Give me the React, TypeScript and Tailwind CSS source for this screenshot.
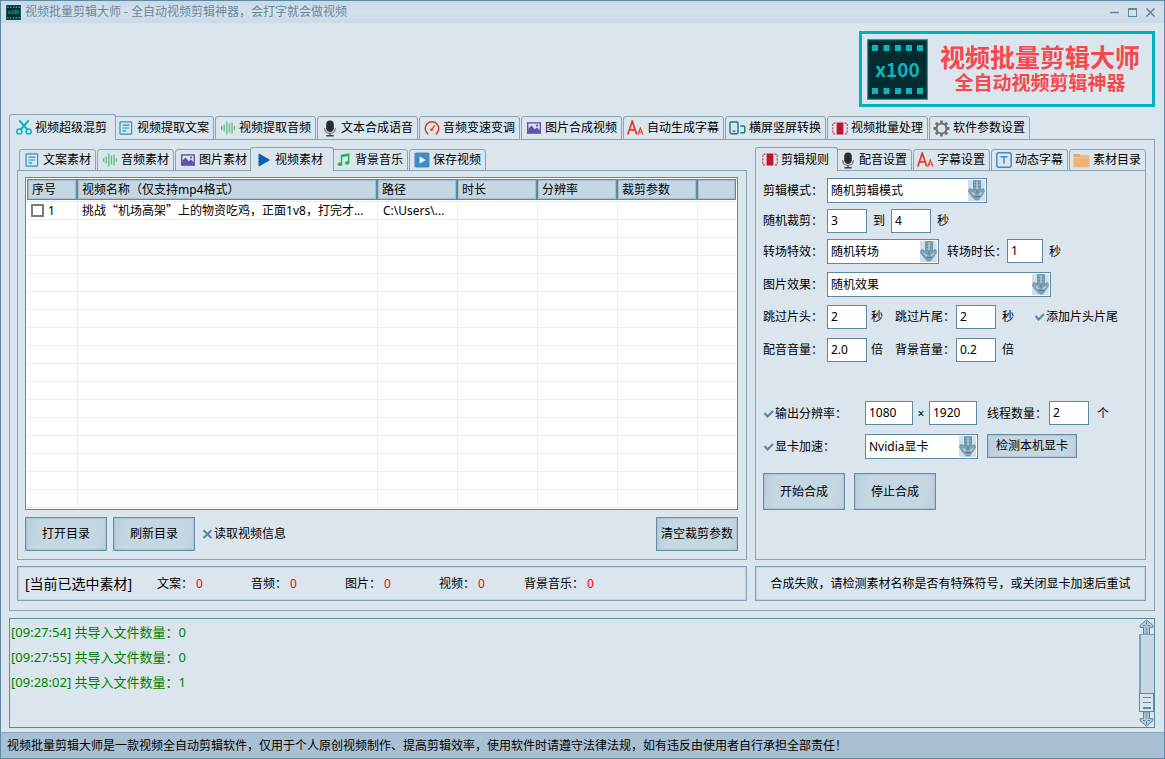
import { useState } from 'react';
import type { ReactNode } from 'react';

/* ---------- icons ---------- */

const ScissorsIcon = () => (
  <svg width="17" height="17" viewBox="0 0 17 17" fill="none" stroke="#0fb5c0" strokeLinecap="round">
    <circle cx="3.600" cy="12.800" r="2.700" strokeWidth="1.600" />
    <circle cx="13.400" cy="12.800" r="2.700" strokeWidth="1.600" />
    <path d="M4 1.500 11.800 10.400M13 1.500 5.200 10.400" strokeWidth="2.200" />
  </svg>
);

const NoteIcon = () => (
  <svg width="16" height="16" viewBox="0 0 16 16" fill="none" stroke="#1c9ac0" strokeWidth="1.2">
    <rect x="2" y="1.8" width="11.6" height="12.4" rx="0.8" />
    <path d="M4.5 5.2h7M4.5 8h6.5M4.5 10.8h3.6" />
  </svg>
);

const WaveIcon = () => (
  <svg width="16" height="16" viewBox="0 0 16 16" fill="none" stroke="#62c282" strokeWidth="1.4">
    <path d="M1.7 6v4M4.2 4.5v7M6.8 1.5v13M9.4 3.5v9M12 2.5v11M14.4 6v4" />
  </svg>
);

const MicIcon = () => (
  <svg width="16" height="17" viewBox="0 0 16 17" fill="none">
    <rect x="4.200" y="0.500" width="7.600" height="11.400" rx="3.800" fill="#2c2c2c" />
    <path d="M2.600 8c.2 3.400 2.300 5.400 5.400 5.400s5.200-2 5.400-5.400" stroke="#77797b" strokeWidth="1.200" />
    <path d="M8 13.400v2M4.300 15.800h7.400" stroke="#444" strokeWidth="1.400" />
  </svg>
);

const GaugeIcon = () => (
  <svg width="17" height="16" viewBox="0 0 17 16" fill="none" stroke="#e03a20" strokeWidth="1.6" strokeLinecap="round">
    <path d="M4 14.200A7.200 7.200 0 1 1 13 14.200" />
    <path d="M8.300 9.400 11.300 5.600" strokeWidth="1.300" />
    <circle cx="8" cy="9.800" r="0.600" />
  </svg>
);

const ImageIcon = () => (
  <svg width="16" height="14" viewBox="0 0 16 14">
    <rect x="1" y="1.200" width="14" height="11.600" fill="#6350a8" />
    <rect x="2.400" y="2.600" width="11.200" height="7" fill="#dbe5ed" />
    <path d="M2.400 10V7.600L5.600 4.400l3.200 3.800 2-1.600 2.800 2.400V10z" fill="#6350a8" />
    <circle cx="11" cy="4.600" r="1.100" fill="#6350a8" />
  </svg>
);

const LettersIcon = () => (
  <svg className="shrink-0" width="17" height="16" viewBox="0 0 17 16" fill="none" stroke="#e4391f">
    <path d="M.8 14.500 5.200 1.200 9.800 14.500M2.400 9.800h5.800" strokeWidth="1.700" />
    <path d="M10.800 14.500 13.300 8 16 14.500M11.800 12.200h3.200" strokeWidth="1.100" />
  </svg>
);

const ScreensIcon = () => (
  <svg className="shrink-0" width="17" height="14" viewBox="0 0 17 14" fill="none" stroke="#157a80" strokeWidth="1.400">
    <rect x="1" y="1" width="8" height="11.800" rx="1.200" />
    <path d="M3.600 10.200h2.800" />
    <path d="M11.400 5h3.200a1.200 1.200 0 0 1 1.200 1.200v4.400a1.200 1.200 0 0 1-1.200 1.200h-3.200" />
  </svg>
);

const FilmIcon = () => (
  <svg width="16" height="13" viewBox="0 0 16 13" fill="none">
    <rect x="4.600" y="0.500" width="6.800" height="12" fill="#bd1230" />
    <path d="M3.600 1.200H.8v10.600h2.800M12.400 1.200h2.800v10.600h-2.800" stroke="#d0405c" strokeWidth="1.200" strokeDasharray="2.200 1.200" />
  </svg>
);

const GearIcon = () => (
  <svg className="shrink-0" width="17" height="17" viewBox="0 0 17 17" fill="none" stroke="#727272">
    <circle cx="8.500" cy="8.500" r="5" strokeWidth="2.200" />
    <path
      d="M8.500 .5v3M8.500 13.500v3M.5 8.500h3M13.500 8.500h3M2.800 2.800l2.100 2.100M12.100 12.100l2.100 2.100M2.800 14.200l2.100-2.100M12.100 4.900l2.100-2.100"
      strokeWidth="2.800"
    />
  </svg>
);

const PlayIcon = () => (
  <svg width="14" height="14" viewBox="0 0 14 14">
    <path d="M2 1 12.400 7 2 13z" fill="#0861b8" stroke="#0861b8" strokeLinejoin="round" />
  </svg>
);

const MusicIcon = () => (
  <svg width="14" height="14" viewBox="0 0 14 14" fill="none">
    <path d="M4.500 10.800V2.300l7.200-1.100v8.200" stroke="#2bb35a" strokeWidth="1.500" />
    <path d="M4.500 3.200l7.200-1.100" stroke="#2bb35a" strokeWidth="2" />
    <ellipse cx="3" cy="11.200" rx="2.300" ry="1.900" fill="#2bb35a" />
    <ellipse cx="10.200" cy="9.800" rx="2.300" ry="1.900" fill="#2bb35a" />
  </svg>
);

const PlayBoxIcon = () => (
  <svg width="16" height="16" viewBox="0 0 16 16">
    <rect x="0.500" y="0.500" width="15" height="15" rx="1.500" fill="#3d8ccb" />
    <path d="M5.600 4.400 11.800 8l-6.200 3.600z" fill="#fff" />
  </svg>
);

const TextBoxIcon = () => (
  <svg width="16" height="16" viewBox="0 0 16 16" fill="none" stroke="#4288c8">
    <rect x="0.800" y="0.800" width="14.400" height="14.400" rx="2" strokeWidth="1.500" />
    <path d="M4.400 4.800h7.200M8 4.800v7" strokeWidth="1.400" />
  </svg>
);

const FolderIcon = () => (
  <svg className="shrink-0" width="17" height="15" viewBox="0 0 17 15">
    <path d="M.5 1h6l1.200 1.500h8.800v1.300H.5z" fill="#e8a45c" />
    <rect x="0.500" y="4.600" width="16" height="9.600" rx="0.600" fill="#f0b377" />
  </svg>
);

const FilmLogo = ({ className }: { className: string }) => (
  <svg className={className} viewBox="0 0 61 61" aria-hidden="true">
    <rect x="0.500" y="0.500" width="60" height="60" rx="1" fill="#032c31" stroke="#00a8b2" strokeWidth="1.500" />
    {[5, 16.5, 28, 39, 50].map((x) => (
      <g key={x} fill="#0bb4bf">
        <rect x={x} y="6" width="6" height="6" />
        <rect x={x} y="49" width="6" height="6" />
      </g>
    ))}
    <text x="30.500" y="37.500" textAnchor="middle" fontSize="19" fontWeight="700" fill="#0bb4bf" fontFamily="'Noto Sans CJK SC', sans-serif">
      x100
    </text>
  </svg>
);

const ArrowGlyph = () => (
  <svg width="17" height="21" viewBox="0 0 17 21" aria-hidden="true">
    <path d="M5.500.5h7v9.500l3-1.500 1 3-3.500 5-2.500 3.500h-3L4 16.500l-3.500-5 1-3 4 1.500z" fill="#7fa4b5" stroke="#6f98ab" />
    <path d="M6 3.500h6M6 6.500h6M6 9.500h6" stroke="#5a8aa0" strokeWidth="0.800" />
    <path d="M9 1.500v8M4 12.500l3 2.500M14 12.500l-3 2.500" stroke="#c3d7e1" strokeWidth="1.200" />
    <path d="M9 10.500v3M6 16.500h6" stroke="#477d95" strokeWidth="1.200" />
  </svg>
);

const ScrollArrow = ({ down = false }: { down?: boolean }) => (
  <svg className={down ? 'rotate-180' : ''} width="15" height="15" viewBox="0 0 15 15" aria-hidden="true">
    <path d="M7.500.8 14 6.500v1.800h-3.500V15h-6V8.300H1V6.500z" fill="#b4cbd6" stroke="#5a899e" />
    <path d="M7.500 2.500v3M4 6.500h2.500M8.500 6.500H11M6.500 9h2M6.500 11h2M6.500 13h2" stroke="#5a899e" />
  </svg>
);

/* ---------- tabs ---------- */

type Tab = { label: string; icon: ReactNode };

const mainTabs: Tab[] = [
  { label: '视频超级混剪', icon: <ScissorsIcon /> },
  { label: '视频提取文案', icon: <NoteIcon /> },
  { label: '视频提取音频', icon: <WaveIcon /> },
  { label: '文本合成语音', icon: <MicIcon /> },
  { label: '音频变速变调', icon: <GaugeIcon /> },
  { label: '图片合成视频', icon: <ImageIcon /> },
  { label: '自动生成字幕', icon: <LettersIcon /> },
  { label: '横屏竖屏转换', icon: <ScreensIcon /> },
  { label: '视频批量处理', icon: <FilmIcon /> },
  { label: '软件参数设置', icon: <GearIcon /> },
];

const materialTabs: Tab[] = [
  { label: '文案素材', icon: <NoteIcon /> },
  { label: '音频素材', icon: <WaveIcon /> },
  { label: '图片素材', icon: <ImageIcon /> },
  { label: '视频素材', icon: <PlayIcon /> },
  { label: '背景音乐', icon: <MusicIcon /> },
  { label: '保存视频', icon: <PlayBoxIcon /> },
];

const ruleTabs: Tab[] = [
  { label: '剪辑规则', icon: <FilmIcon /> },
  { label: '配音设置', icon: <MicIcon /> },
  { label: '字幕设置', icon: <LettersIcon /> },
  { label: '动态字幕', icon: <TextBoxIcon /> },
  { label: '素材目录', icon: <FolderIcon /> },
];

function TabStrip({ tabs, initial, name, large = false }: { tabs: Tab[]; initial: number; name: string; large?: boolean }) {
  const [active, setActive] = useState(initial);
  return (
    <div
      role="tablist"
      aria-label={name}
      className={`-mb-px flex items-end gap-px ${large ? 'h-[26px]' : 'h-6'} ${active === 0 ? '' : 'pl-0.5'}`}
    >
      {tabs.map((tab, i) => {
        const on = i === active;
        const width = large ? (on ? 'w-[107px]' : 'w-[101px]') : on ? (i ? 'w-[84px]' : 'w-[83px]') : 'w-[77px]';
        const height = on ? 'h-full' : large ? 'h-6' : 'h-[22px]';
        const state = on ? `z-10 -mr-1 border-b-0 ${i ? '-ml-[3px] pr-2.5' : 'pr-2'}` : 'pr-1';
        return (
          <button
            key={tab.label}
            type="button"
            role="tab"
            aria-selected={on}
            onClick={() => setActive(i)}
            className={`relative flex shrink-0 items-center justify-end gap-[3px] rounded-t-[3px] border border-[#8ba5b2] bg-[#dbe5ed] whitespace-nowrap ${width} ${height} ${state}`}
          >
            <span className="flex w-4 shrink-0 justify-center">{tab.icon}</span>
            {tab.label}
          </button>
        );
      })}
    </div>
  );
}

/* ---------- form controls ---------- */

function NumberBox({ id, label, value, width = 'w-10' }: { id: string; label?: string; value: string; width?: string }) {
  return (
    <input
      id={id}
      aria-label={label}
      defaultValue={value}
      className={`h-6 self-start border border-[#5b8aa2] bg-white px-[3px] pb-px outline-none ${width}`}
    />
  );
}

function Picker({ id, label, options, width }: { id: string; label?: string; options: string[]; width: string }) {
  return (
    <span className={`grid ${width}`}>
      <select
        id={id}
        aria-label={label}
        className="col-start-1 row-start-1 h-[25px] w-full appearance-none border border-[#5b8aa2] bg-white pr-5 pl-[3px] outline-none"
      >
        {options.map((o) => (
          <option key={o}>{o}</option>
        ))}
      </select>
      <span className="pointer-events-none z-10 col-start-1 row-start-1 mr-0.5 self-center justify-self-end bg-[#d0dfe9]">
        <ArrowGlyph />
      </span>
    </span>
  );
}

function Tick({ id, label, checked = false }: { id: string; label: string; checked?: boolean }) {
  const [on, setOn] = useState(checked);
  return (
    <label htmlFor={id} className="flex items-center gap-px whitespace-nowrap">
      <span className="grid h-3 w-[11px] place-items-center">
        <input
          id={id}
          type="checkbox"
          checked={on}
          onChange={() => setOn(!on)}
          className="col-start-1 row-start-1 h-3 w-[11px] appearance-none"
        />
        <svg className="pointer-events-none col-start-1 row-start-1" width="11" height="10" viewBox="0 0 11 10" fill="none" stroke="#5487a0" strokeWidth="2">
          {on ? <path d="M1.500 4 4.500 7.500 10 2" /> : <path d="M1.500 1.200 9.500 9M9.500 1.200 1.500 9" />}
        </svg>
      </span>
      {label}
    </label>
  );
}

const buttonLook =
  'border border-[#668ea5] bg-[linear-gradient(100deg,#b9cddb,#c5d7e3_18%,#c5d7e3_85%,#bed0de)] shadow-[inset_0_0_1px_1px_#a9c2d0] whitespace-nowrap';

function ActionButton({ children, size }: { children: ReactNode; size: string }) {
  return (
    <button type="button" className={`${buttonLook} ${size}`}>
      {children}
    </button>
  );
}

function FieldLabel({ htmlFor, children }: { htmlFor: string; children: ReactNode }) {
  return (
    <label htmlFor={htmlFor} className="w-16 shrink-0 whitespace-nowrap">
      {children}
    </label>
  );
}

/* ---------- material list ---------- */

const columns = [
  { title: '序号', width: 'w-[50px]' },
  { title: '视频名称（仅支持mp4格式）', width: '' },
  { title: '路径', width: 'w-20' },
  { title: '时长', width: 'w-20' },
  { title: '分辨率', width: 'w-20' },
  { title: '裁剪参数', width: 'w-20' },
  { title: '', width: 'w-[39px]' },
];

const emptyRows = Array.from({ length: 16 }, (_, i) => i);

function MaterialTable() {
  return (
    <div className="border border-[#5b8aa2] bg-white p-px">
      <table className="w-full table-fixed border-separate border-spacing-0 text-left">
        <thead>
          <tr>
            {columns.map((c, i) => (
              <th key={i} className={`border-b border-[#ececec] p-0 pb-px font-normal ${c.width}`}>
                <div className="h-[21px] border border-[#5b8aa2] bg-[#c5d7e3] pl-1 leading-[19px] whitespace-nowrap shadow-[inset_0_0_1px_1px_#a3bdcc]">
                  {c.title}
                </div>
              </th>
            ))}
          </tr>
        </thead>
        <tbody>
          <tr>
            <td className="h-[18px] border-b border-[#ececec] p-0">
              <label className="flex items-center gap-1 pl-1">
                <input type="checkbox" className="size-[13px] appearance-none border-2 border-[#7b7b7b] bg-white" />
                1
              </label>
            </td>
            <td className="truncate border-b border-l border-[#ececec] p-0 pl-1 leading-4">
              挑战<span className="font-['Noto_Sans_CJK_SC',sans-serif]">“</span>机场高架
              <span className="font-['Noto_Sans_CJK_SC',sans-serif]">”</span>上的物资吃鸡，正面1v8，打完才...
            </td>
            <td className="border-b border-l border-[#ececec] p-0 pl-[5px] leading-4 whitespace-nowrap">C:\Users\...</td>
            {[0, 1, 2, 3].map((i) => (
              <td key={i} className="border-b border-l border-[#ececec] p-0" />
            ))}
          </tr>
          {emptyRows.map((r) => (
            <tr key={r}>
              {columns.map((_, i) => (
                <td key={i} className={`h-[18px] border-b border-[#ececec] p-0 ${i ? 'border-l' : ''}`} />
              ))}
            </tr>
          ))}
        </tbody>
      </table>
    </div>
  );
}

/* ---------- panels ---------- */

function MaterialPanel() {
  return (
    <section className="flex min-w-0 flex-1 flex-col">
      <TabStrip tabs={materialTabs} initial={3} name="素材" />
      <div className="flex flex-1 flex-col border border-[#8ba5b2] pt-1.5 pr-2 pb-2 pl-[7px]">
        <MaterialTable />
        <div className="mt-[7px] flex items-center gap-1.5">
          <ActionButton size="h-[34px] w-[82px]">打开目录</ActionButton>
          <ActionButton size="h-[34px] w-[82px]">刷新目录</ActionButton>
          <div className="flex-1 pl-px">
            <Tick id="read-info" label="读取视频信息" />
          </div>
          <ActionButton size="h-[34px] w-[82px]">清空裁剪参数</ActionButton>
        </div>
      </div>
    </section>
  );
}

const row = 'flex h-[25px] items-center';
const boxRow = 'flex h-6 items-center';

function RulesPanel() {
  return (
    <section className="flex w-[391px] shrink-0 flex-col">
      <TabStrip tabs={ruleTabs} initial={0} name="规则" />
      <form className="flex-1 border border-[#8ba5b2] px-[7px] pt-[7px]" onSubmit={(e) => e.preventDefault()}>
        <div className={row}>
          <FieldLabel htmlFor="mode">剪辑模式：</FieldLabel>
          <Picker id="mode" width="w-40" options={['随机剪辑模式', '顺序剪辑模式']} />
        </div>
        <div className={`${boxRow} mt-1.5`}>
          <FieldLabel htmlFor="cut-min">随机裁剪：</FieldLabel>
          <NumberBox id="cut-min" value="3" />
          <label htmlFor="cut-max" className="w-6 text-center">到</label>
          <NumberBox id="cut-max" value="4" />
          <span className="ml-1.5">秒</span>
        </div>
        <div className={`${row} mt-1.5`}>
          <FieldLabel htmlFor="transition">转场特效：</FieldLabel>
          <Picker id="transition" width="w-28" options={['随机转场', '无转场']} />
          <label htmlFor="transition-time" className="ml-2 w-[60px] whitespace-nowrap">转场时长：</label>
          <NumberBox id="transition-time" value="1" width="w-9" />
          <span className="ml-1.5">秒</span>
        </div>
        <div className={`${row} mt-2`}>
          <FieldLabel htmlFor="effect">图片效果：</FieldLabel>
          <Picker id="effect" width="w-56" options={['随机效果', '无效果']} />
        </div>
        <div className={`${boxRow} mt-2`}>
          <FieldLabel htmlFor="skip-head">跳过片头：</FieldLabel>
          <NumberBox id="skip-head" value="2" />
          <span className="w-7 pl-1">秒</span>
          <label htmlFor="skip-tail" className="w-[61px] whitespace-nowrap">跳过片尾：</label>
          <NumberBox id="skip-tail" value="2" />
          <span className="w-[38px] pl-1.5">秒</span>
          <Tick id="add-ends" label="添加片头片尾" checked />
        </div>
        <div className={`${boxRow} mt-[9px]`}>
          <FieldLabel htmlFor="voice-volume">配音音量：</FieldLabel>
          <NumberBox id="voice-volume" value="2.0" />
          <span className="w-7 pl-1">倍</span>
          <label htmlFor="music-volume" className="w-[61px] whitespace-nowrap">背景音量：</label>
          <NumberBox id="music-volume" value="0.2" />
          <span className="pl-1.5">倍</span>
        </div>
        <div className={`${row} mt-[39px]`}>
          <div className="w-[102px]">
            <Tick id="resolution" label="输出分辨率：" checked />
          </div>
          <NumberBox id="out-width" label="宽度" value="1080" width="w-12" />
          <span className="w-4 text-center">×</span>
          <NumberBox id="out-height" label="高度" value="1920" width="w-12" />
          <label htmlFor="threads" className="ml-2.5 w-[62px] whitespace-nowrap">线程数量：</label>
          <NumberBox id="threads" value="2" />
          <span className="ml-2">个</span>
        </div>
        <div className={`${row} mt-2`}>
          <div className="w-[102px]">
            <Tick id="gpu" label="显卡加速：" checked />
          </div>
          <Picker id="gpu-kind" label="显卡" width="w-[113px]" options={['Nvidia显卡', 'AMD显卡']} />
          <div className="ml-[9px] flex self-start">
            <ActionButton size="h-6 w-[90px]">检测本机显卡</ActionButton>
          </div>
        </div>
        <div className="mt-3.5 flex gap-[9px]">
          <ActionButton size="h-[37px] w-[82px]">开始合成</ActionButton>
          <ActionButton size="h-[37px] w-[82px]">停止合成</ActionButton>
        </div>
      </form>
    </section>
  );
}

const counts = [
  { label: '文案：', width: 'w-[94px]' },
  { label: '音频：', width: 'w-[94px]' },
  { label: '图片：', width: 'w-[94px]' },
  { label: '视频：', width: 'w-[85px]' },
  { label: '背景音乐：', width: 'w-[94px]' },
];

const frame = 'flex h-[35px] items-center border border-[#7fa3b6] shadow-[inset_0_0_1px_1px_#c3d4df]';

const logs = [
  ['09:27:54', 0],
  ['09:27:55', 0],
  ['09:28:02', 1],
] as const;

export default function App() {
  return (
    <div
      lang="zh-CN"
      className="flex min-h-screen flex-col border border-[#5e8aa2] bg-[#dbe5ed] font-['Noto_Sans','Noto_Sans_CJK_SC',sans-serif] text-[12px] leading-4 text-black"
    >
      <header className="flex h-[22px] items-center bg-[linear-gradient(180deg,#c9d8e4,#d5e1ea_45%,#ccdae6)] pr-2 pl-[5px] text-[#6688a0]">
        <FilmLogo className="size-[15px]" />
        <h1 className="ml-1 flex-1">视频批量剪辑大师 - 全自动视频剪辑神器，会打字就会做视频</h1>
        <div className="flex items-center gap-[7px]">
          <button type="button" aria-label="最小化">
            <svg width="11" height="11" viewBox="0 0 11 11" stroke="#5b8aa2" strokeWidth="1.500"><path d="M1 5.500h9" /></svg>
          </button>
          <button type="button" aria-label="最大化">
            <svg width="11" height="11" viewBox="0 0 11 11" fill="none" stroke="#5b8aa2"><path d="M1.500 2h8" strokeWidth="2" /><rect x="1.500" y="1.500" width="8" height="8" /></svg>
          </button>
          <button type="button" aria-label="关闭">
            <svg width="11" height="11" viewBox="0 0 11 11" stroke="#5b8aa2" strokeWidth="1.700"><path d="M1.500 1.500l8 8M9.500 1.500l-8 8" /></svg>
          </button>
        </div>
      </header>

      <div className="flex flex-1 flex-col pt-2 pr-[9px] pb-1 pl-2">
        <div className="flex h-[76px] w-[296px] items-center self-end border-3 border-[#00b4be] pl-[5px] whitespace-nowrap text-[#f4484f]">
          <FilmLogo className="size-[61px] shrink-0" />
          <div className="flex-1 text-center font-bold">
            <p className="text-[25px] leading-[28px]">视频批量剪辑大师</p>
            <p className="text-[19px] leading-6">全自动视频剪辑神器</p>
          </div>
        </div>

        <div className="mt-[7px]">
          <TabStrip tabs={mainTabs} initial={0} name="功能" large />
        </div>
        <main className="border border-[#8ba5b2] py-[7px] pr-2 pl-[7px]">
          <div className="flex gap-2">
            <MaterialPanel />
            <RulesPanel />
          </div>
          <div className="mt-1.5 mb-0.5 flex gap-2">
            <div className={`${frame} min-w-0 flex-1 pl-[7px] whitespace-nowrap`}>
              <span className="w-[132px] text-[14px]">[当前已选中素材]</span>
              {counts.map((c) => (
                <span key={c.label} className={`flex gap-[3px] ${c.width}`}>
                  {c.label}
                  <span className="text-[#f00]">0</span>
                </span>
              ))}
            </div>
            <div className={`${frame} w-[391px] shrink-0 justify-center whitespace-nowrap`}>
              合成失败，请检测素材名称是否有特殊符号，或关闭显卡加速后重试
            </div>
          </div>
        </main>

        <div className="mt-[7px] flex min-h-[110px] flex-1 border border-[#5b8aa2]">
          <ul className="flex-1 pt-px pl-px text-[13px] leading-[25px] text-[#008000]">
            {logs.map(([time, n]) => (
              <li key={time}>
                [{time}] 共导入文件数量：{n}
              </li>
            ))}
          </ul>
          <div className="flex w-[15px] flex-col">
            <ScrollArrow />
            <div className="flex-1 border-t border-l-2 border-[#7fa3b6] bg-[#c5d7e3]" />
            <div className="flex h-[19px] flex-col items-center justify-center gap-1 border border-[#5b8aa2] bg-[#dbe5ed]">
              <span className="h-px w-2 bg-[#5b8aa2]" />
              <span className="h-px w-2 bg-[#5b8aa2]" />
              <span className="h-0.5 w-2 bg-[#5b8aa2]" />
            </div>
            <ScrollArrow down />
          </div>
        </div>
      </div>

      <footer className="flex h-[26px] items-center border-t border-[#86a6ba] bg-[#a9c0d3] pl-1.5">
        视频批量剪辑大师是一款视频全自动剪辑软件，仅用于个人原创视频制作、提高剪辑效率，使用软件时请遵守法律法规，如有违反由使用者自行承担全部责任！
      </footer>
    </div>
  );
}
